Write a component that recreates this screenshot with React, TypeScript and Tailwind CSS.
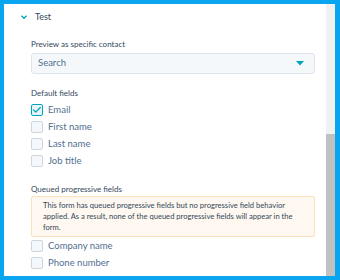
import { Check } from "lucide-react";

function Box({ checked, label }: { checked?: boolean; label: string }) {
  return (
    <div className="flex items-center h-[17px]">
      <span
        className={`flex items-center justify-center w-[12px] h-[12px] rounded-[2px] border ${
          checked ? "border-[#00a4bd] bg-[#e5f5f8]" : "border-[#cbd6e2] bg-[#f5f8fa]"
        }`}
      >
        {checked && <Check size={10} strokeWidth={3} className="text-[#00a4bd]" />}
      </span>
      <span className="ml-[5px] text-[9.5px] leading-[12px] text-[#516f90]">{label}</span>
    </div>
  );
}

export default function App() {
  return (
    <div
      className="w-[340px] h-[280px] bg-[#0aa5f0] pt-[4px] pb-[4px] pl-[4px] pr-[5px] flex"
      style={{ fontFamily: "Lato, 'Open Sans', sans-serif" }}
    >
      <div className="flex-1 bg-white overflow-hidden">
        {/* header */}
        <div className="flex items-center h-[26px] pl-[17px]">
          <svg width="6" height="4" viewBox="0 0 6 4" className="shrink-0">
            <path d="M0.5 0.8 L3 3.2 L5.5 0.8" fill="none" stroke="#00a4bd" strokeWidth="1.4" />
          </svg>
          <span className="ml-[8px] text-[9px] leading-[12px] text-[#33475b]">Test</span>
        </div>

        <div className="pl-[27px] pr-[11px]">
          <div className="mt-[8px] text-[8px] leading-[12px] text-[#33475b]">Preview as specific contact</div>
          <div className="mt-[3px] h-[21px] flex items-center justify-between rounded-[3px] border border-[#dfe3eb] bg-[#f5f8fa] px-[6px]">
            <span className="text-[9.5px] text-[#516f90]">Search</span>
            <svg width="8" height="5" viewBox="0 0 8 5" className="mr-[4px]">
              <path d="M0 0 H8 L4 4.5 Z" fill="#00a4bd" />
            </svg>
          </div>

          <div className="mt-[13px] text-[8px] leading-[12px] text-[#33475b]">Default fields</div>
          <div className="mt-[2px] flex flex-col">
            <Box checked label="Email" />
            <Box label="First name" />
            <Box label="Last name" />
            <Box label="Job title" />
          </div>

          <div className="mt-[14px] text-[8px] leading-[12px] text-[#33475b]">Queued progressive fields</div>
          <div className="mt-[1px] h-[41px] rounded-[2px] border border-[#fbe1bd] bg-[#fef8f0] pl-[11px] pr-[8px] pt-[3px] text-[7.6px] leading-[11px] text-[#33475b]">
            This form has queued progressive fields but no progressive field behavior applied. As a
            result, none of the queued progressive fields will appear in the form.
          </div>
          <div className="flex flex-col">
            <Box label="Company name" />
            <Box label="Phone number" />
          </div>
        </div>
      </div>
      <div className="w-[9px] bg-[#f1f1f1] flex flex-col">
        <div className="h-[130px]" />
        <div className="flex-1 bg-[#c1c1c1]" />
      </div>
    </div>
  );
}
